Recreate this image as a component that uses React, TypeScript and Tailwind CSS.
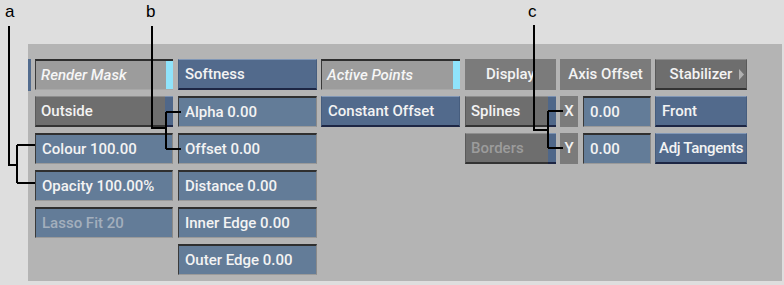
import React from 'react';

const font = {fontFamily: 'Roboto, "Liberation Sans", sans-serif'};

// raised blue button
const BlueBtn = ({label, center}: {label: string; center?: boolean}) => (
    <div
        className={`h-[31px] flex items-center px-[6px] bg-[#526a8c] border-t border-t-[#8197b6] border-b-2 border-b-[#1d2644] border-x border-x-[#465d7e] text-[15px] font-medium text-[#f3f3f3] whitespace-nowrap ${center ? 'justify-center' : ''}`}
    >
        {label}
    </div>
);

// sunken value field
const Field = ({label, dim}: {label: string; dim?: boolean}) => (
    <div
        className={`h-[31px] flex items-center px-[6px] bg-[#637c98] border-t-2 border-t-[#2f2f2f] border-l border-l-[#3a3a3a] border-b border-b-[#9a9a9a] border-r border-r-[#8a8a8a] text-[15px] font-medium whitespace-nowrap ${dim ? 'text-[#a3afbd]' : 'text-[#f3f3f3]'}`}
    >
        {label}
    </div>
);

// raised gray button, optional blue slab on the right
const GrayBtn = ({label, dim, slab}: {label: string; dim?: boolean; slab?: boolean}) => (
    <div className="h-[31px] flex">
        <div
            className={`flex-1 flex items-center px-[5px] bg-[#6e6e6e] border-t border-t-[#8e8e8e] border-b-2 border-b-[#333] border-l border-l-[#5a5a5a] text-[15px] font-medium whitespace-nowrap ${dim ? 'text-[#9c9c9c]' : 'text-[#f3f3f3]'}`}
        >
            {label}
        </div>
        {slab && <div className="w-[8px] bg-[#4f6789] border-t border-t-[#7a90b0] border-b-2 border-b-[#1d2644]"/>}
    </div>
);

// toggle with cyan light on the right
const Toggle = ({label}: {label: string}) => (
    <div className="h-[31px] flex bg-[#9c9c9c] border-t-2 border-t-[#2e2e2e] border-l border-l-[#3a3a3a] border-b border-b-[#a8a8a8]">
        <div className="flex-1 flex items-center px-[5px] text-[15px] font-medium italic text-[#f6f6f6] whitespace-nowrap">
            {label}
        </div>
        <div className="w-[7px] bg-[#8fe3fb]"/>
    </div>
);

const Flat = ({label, className = ''}: {label: string; className?: string}) => (
    <div className={`h-[31px] flex items-center justify-center bg-[#7b7b7b] text-[15px] font-medium text-[#f3f3f3] whitespace-nowrap ${className}`}>
        {label}
    </div>
);

export default function App() {
    return (
        <div className="relative w-[784px] h-[285px] bg-[#dedede] overflow-hidden" style={font}>
            <div className="ml-[28px] mt-[44px] w-[754px] h-[237px] bg-[#b4b4b4] flex gap-[4px] pt-[15px]">
                {/* left sliver */}
                <div className="w-[3px]">
                    <div className="h-[32px] bg-[#536c8e]"/>
                </div>

                <div className="w-[138px] flex flex-col gap-[6px]">
                    <Toggle label="Render Mask"/>
                    <GrayBtn label="Outside" slab/>
                    <Field label="Colour 100.00"/>
                    <Field label="Opacity 100.00%"/>
                    <Field label="Lasso Fit 20" dim/>
                </div>

                <div className="w-[139px] ml-[1px] flex flex-col gap-[6px]">
                    <BlueBtn label="Softness"/>
                    <Field label="Alpha 0.00"/>
                    <Field label="Offset 0.00"/>
                    <Field label="Distance 0.00"/>
                    <Field label="Inner Edge 0.00"/>
                    <Field label="Outer Edge 0.00"/>
                </div>

                <div className="w-[139px] flex flex-col gap-[6px]">
                    <Toggle label="Active Points"/>
                    <BlueBtn label="Constant Offset"/>
                </div>

                <div className="w-[91px] ml-[1px] flex flex-col gap-[6px]">
                    <Flat label="Display"/>
                    <GrayBtn label="Splines" slab/>
                    <GrayBtn label="Borders" dim slab/>
                </div>

                <div className="w-[91px] flex flex-col gap-[6px]">
                    <Flat label="Axis Offset"/>
                    <div className="flex gap-[5px]">
                        <Flat label="X" className="w-[18px]"/>
                        <div className="flex-1"><Field label="0.00"/></div>
                    </div>
                    <div className="flex gap-[5px]">
                        <Flat label="Y" className="w-[18px]"/>
                        <div className="flex-1"><Field label="0.00"/></div>
                    </div>
                </div>

                <div className="w-[92px] flex flex-col gap-[6px]">
                    <div className="h-[31px] flex items-center justify-center relative bg-[#6e6e6e] border-t border-t-[#8e8e8e] border-b-2 border-b-[#333] border-x border-x-[#5a5a5a] text-[15px] font-medium text-[#f3f3f3]">
                        Stabilizer
                        <svg className="absolute right-[2px] top-[9px]" width="5" height="11" viewBox="0 0 5 11">
                            <path d="M0 0 L5 5.5 L0 11 Z" fill="#b0b0b0"/>
                        </svg>
                    </div>
                    <BlueBtn label="Front"/>
                    <div className="h-[31px] flex items-center px-[3px] bg-[#526a8c] border-t border-t-[#8197b6] border-b-2 border-b-[#1d2644] border-x border-x-[#465d7e] text-[15px] font-medium text-[#f3f3f3] whitespace-nowrap tracking-[-0.3px]">
                        Adj Tangents
                    </div>
                </div>
            </div>

            {/* callouts */}
            <svg className="absolute left-0 top-0 pointer-events-none" width="784" height="285" viewBox="0 0 784 285">
                <g stroke="#000" strokeWidth="2" fill="none">
                    <path d="M9 26 V165 H17 M17 145 V183 M17 145 H35 M17 183 H35"/>
                    <path d="M152 26 V128 H166 M166 112 V149 M166 112 H181 M166 149 H181"/>
                    <path d="M534 25 V130 H548 M548 111 V148 M548 111 H563 M548 148 H563"/>
                </g>
                <g fill="#000" fontSize="17" fontFamily='"Liberation Sans", Arial, sans-serif'>
                    <text x="5" y="17">a</text>
                    <text x="146" y="17">b</text>
                    <text x="528" y="17">c</text>
                </g>
            </svg>
        </div>
    );
}
